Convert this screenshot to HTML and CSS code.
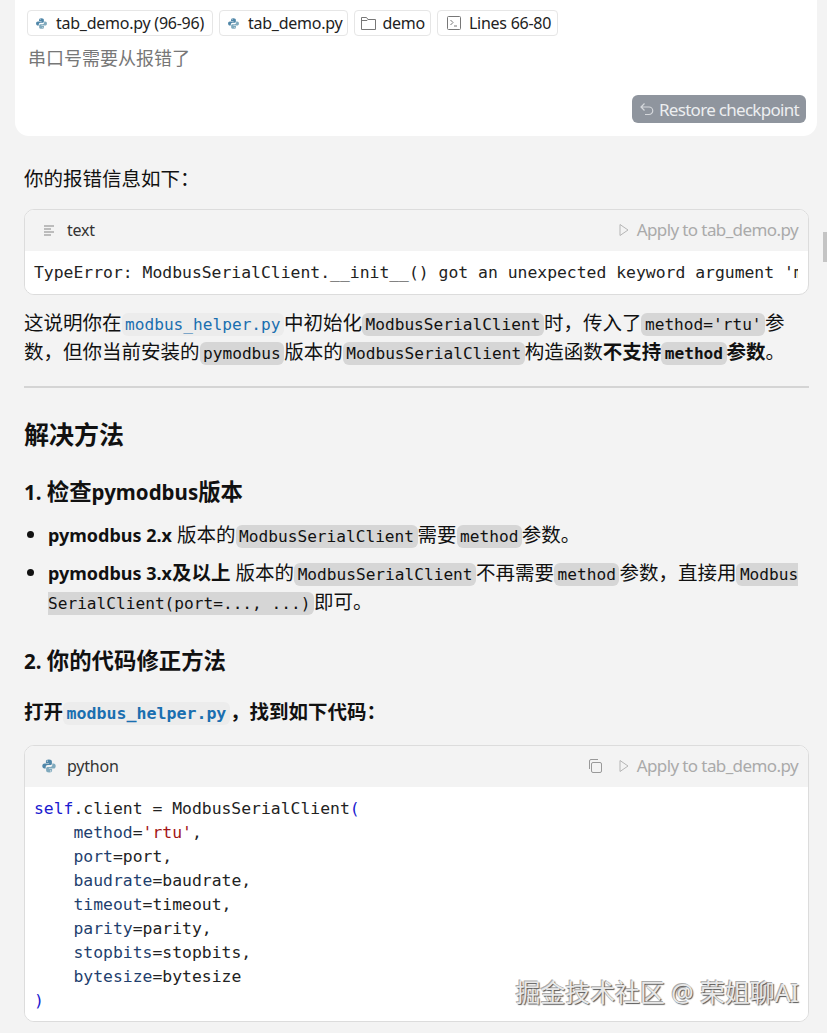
FILE: index.html
```html
<!DOCTYPE html>
<html lang="zh">
<head>
  <meta charset="UTF-8">
  <title>解决方法</title>
  <link rel="stylesheet" href="styles.css">
</head>
<body>
  <svg class="defs" width="0" height="0">
    <symbol id="py" viewBox="0 0 16 16">
      <path fill="#4f86a8" d="M7.900 1.500c-2.400 0-3 .9-3 2v1.400h3.200v.6H3.500c-1.300 0-2.200 1-2.200 2.600s.9 2.500 2.200 2.500h1.200V9.100c0-1.100.9-2 2-2h2.600c.9 0 1.600-.7 1.600-1.600V3.500c0-1.100-1-2-3-2zM6.300 2.500a.6.6 0 1 1 0 1.200.6.6 0 0 1 0-1.200z"/>
      <path fill="#7fa9bd" d="M8.100 14.500c2.400 0 3-.9 3-2v-1.400H7.900v-.6h4.600c1.300 0 2.200-1 2.200-2.600s-.9-2.500-2.200-2.500h-1.200v1.500c0 1.100-.9 2-2 2H6.700c-.9 0-1.600.7-1.600 1.600v2c0 1.100 1 2 3 2zm1.600-1a.6.6 0 1 1 0-1.200.6.6 0 0 1 0 1.200z"/>
    </symbol>
  </svg>

  <div class="user-card">
    <div class="chips">
      <span class="chip"><svg class="chip-icon"><use href="#py"/></svg>tab_demo.py (96-96)</span>
      <span class="chip"><svg class="chip-icon"><use href="#py"/></svg>tab_demo.py</span>
      <span class="chip chip-folder">
        <svg class="chip-icon" viewBox="0 0 17 16" fill="none" stroke="#777"><path d="M1.500 14.500v-12h5l1.500 2h7.500v10z"/><path d="M1.500 5.500h5.500l1-1"/></svg>
        demo
      </span>
      <span class="chip chip-term">
        <svg class="chip-icon" viewBox="0 0 14 16" fill="none" stroke="#777"><rect x=".5" y="1.500" width="13" height="13" rx="1"/><path d="M3.500 5l2.500 2.500-2.500 2.500M7 11h3"/></svg>
        Lines 66-80
      </span>
    </div>
    <p class="user-text">串口号需要从报错了</p>
    <div class="restore-row">
      <button class="restore-btn">
        <svg width="16" height="16" viewBox="0 0 16 16" fill="none" stroke="#d5d8dc" stroke-width="1.200"><path d="M5.500 2.500L2 6l3.500 3.500M2 6h8a3.700 3.700 0 0 1 0 7.500H6"/></svg>
        Restore checkpoint
      </button>
    </div>
  </div>

  <div class="content">
    <p class="intro">你的报错信息如下：</p>

    <div class="code-block">
      <div class="code-head">
        <svg class="lang-icon" viewBox="0 0 16 16" stroke="#aaa" stroke-width="1.300"><path d="M3 4h10M3 7h7M3 10h10M3 13h7"/></svg>
        <span class="lang">text</span>
        <span class="apply">
          <svg class="play" viewBox="0 0 12 14" fill="none" stroke="#b5b5b5"><path d="M2 1.500l8 5.500-8 5.500z"/></svg>
          Apply to tab_demo.py
        </span>
      </div>
      <pre class="code code-short">TypeError: ModbusSerialClient.__init__() got an unexpected keyword argument 'method'</pre>
    </div>

    <p class="para">这说明你在<code class="file">modbus_helper.py</code>中初始化<code>ModbusSerialClient</code>时，传入了<code>method='rtu'</code>参数，但你当前安装的<code>pymodbus</code>版本的<code>ModbusSerialClient</code>构造函数<strong>不支持<code>method</code>参数</strong>。</p>

    <hr class="rule">

    <h2 class="title">解决方法</h2>

    <h3 class="sub"><span class="lat">1. </span>检查<span class="lat">pymodbus</span>版本</h3>
    <ul class="list">
      <li><strong class="lat">pymodbus 2.x</strong> 版本的<code>ModbusSerialClient</code>需要<code>method</code>参数。</li>
      <li><strong><span class="lat">pymodbus 3.x</span>及以上</strong> 版本的<code>ModbusSerialClient</code>不再需要<code>method</code>参数，直接用<code>Modbus<wbr>SerialClient(port=..., ...)</code>即可。</li>
    </ul>

    <h3 class="sub sub-two"><span class="lat">2. </span>你的代码修正方法</h3>
    <p class="para open"><strong>打开<code class="file">modbus_helper.py</code>，找到如下代码：</strong></p>

    <div class="code-block">
      <div class="code-head">
        <svg class="lang-icon"><use href="#py"/></svg>
        <span class="lang">python</span>
        <span class="apply">
          <svg class="copy" viewBox="0 0 16 16" fill="none" stroke="#999"><rect x="4.500" y="4.500" width="10" height="10" rx="1.500"/><path d="M2.500 11V3a1.500 1.500 0 0 1 1.500-1.500h7"/></svg>
          <svg class="play" viewBox="0 0 12 14" fill="none" stroke="#b5b5b5"><path d="M2 1.500l8 5.500-8 5.500z"/></svg>
          Apply to tab_demo.py
        </span>
      </div>
<pre class="code"><span class="kw">self</span>.client = ModbusSerialClient<span class="kw">(</span>
    <span class="arg">method</span>=<span class="str">'rtu'</span>,
    <span class="arg">port</span>=port,
    <span class="arg">baudrate</span>=baudrate,
    <span class="arg">timeout</span>=timeout,
    <span class="arg">parity</span>=parity,
    <span class="arg">stopbits</span>=stopbits,
    <span class="arg">bytesize</span>=bytesize
<span class="kw">)</span></pre>
    </div>
  </div>

  <div class="scroll-thumb"></div>
  <div class="watermark">掘金技术社区 @ 荣姐聊AI</div>
</body>
</html>
```

FILE: styles.css
```css
* { box-sizing: border-box; }
html, body { margin: 0; padding: 0; }
body {
  position: relative;
  height: 1033px;
  overflow: hidden;
  background: #f3f3f3;
  color: #111;
  font-family: "Noto Sans", "Noto Sans CJK SC", sans-serif;
  font-size: 19.5px;
}
.defs { position: absolute; }

.user-card {
  height: 136px;
  margin: 0 10px 0 15px;
  padding: 10px 11px 0 12px;
  background: #fff;
  border-radius: 0 0 14px 14px;
}
.chips { display: flex; gap: 6px; }
.chip {
  display: flex;
  align-items: center;
  gap: 8px;
  height: 26px;
  padding: 0 5px 0 7px;
  border: 1px solid #e6e6e6;
  border-radius: 4px;
  font-size: 16px;
  letter-spacing: -0.25px;
  color: #222;
  white-space: nowrap;
}
.chip:first-child { padding-right: 8px; }
.chip-icon { width: 13px; height: 13px; flex: none; }
.chip-folder { gap: 5px; padding-left: 5px; }
.chip-folder .chip-icon { width: 17px; height: 16px; }
.chip-term { padding-left: 9px; padding-right: 6px; }
.chip-term .chip-icon { width: 14px; height: 16px; }
.user-text { margin: 9px 0 0 1px; font-size: 18px; line-height: 26px; color: #777; }
.restore-row { display: flex; justify-content: flex-end; margin-top: 24px; }
.restore-btn {
  display: flex;
  align-items: center;
  gap: 4px;
  height: 28px;
  padding: 0 7px 0 7px;
  border: none;
  border-radius: 6px;
  background: #8f959e;
  color: #eceef0;
  font-family: inherit;
  font-size: 17px;
  letter-spacing: -0.7px;
}

.content { padding: 0 18px 0 24px; }
.intro { margin: 28px 0 0; line-height: 30px; }

.code-block {
  margin-top: 15px;
  border: 1px solid #dcdcdc;
  border-radius: 10px;
  overflow: hidden;
  background: #fff;
}
.code-head {
  display: flex;
  align-items: center;
  height: 41px;
  padding: 0 10px 2px 16px;
  background: #f3f3f3;
  font-size: 16px;
}
.lang-icon { width: 16px; height: 16px; margin-right: 10px; flex: none; }
.lang { color: #333; letter-spacing: -0.2px; }
.apply {
  display: flex;
  align-items: center;
  margin-left: auto;
  color: #aaa;
  font-size: 17px;
  letter-spacing: -0.6px;
  white-space: nowrap;
}
.play { width: 12px; height: 14px; margin-right: 7px; }
.copy { width: 16px; height: 16px; margin-right: 15px; }
.code {
  margin: 0;
  padding: 10px 9px 8px;
  overflow: hidden;
  background: #fff;
  color: #222;
  font-family: "DejaVu Sans Mono", monospace;
  font-size: 16.4px;
  line-height: 24px;
}
.code-short { height: 43px; margin-right: 10px; }
.kw { color: #1a1ad0; }
.arg { color: #1f3f6e; }
.str { color: #a31515; }

code {
  padding: 2px 3.5px;
  border-radius: 6px;
  background: #d6d6d6;
  font-family: "DejaVu Sans Mono", monospace;
  font-size: 16.15px;
  line-height: 1;
}
code.file { background: #ececec; color: #1a6fb0; }
strong code.file { font-size: 16.6px; }
.lat { font-size: 18px; line-height: 1; }
.sub .lat { font-size: 20.5px; }

.para { margin: 13px 0 0; line-height: 29px; }
.rule { height: 2px; margin: 20px 0 0; border: none; background: #d4d4d4; }
.title { margin: 29px 0 0; font-size: 25px; line-height: 34px; font-weight: 700; }
.sub { margin: 26px 0 0; font-size: 22.4px; line-height: 30px; font-weight: 700; }
.sub-two { margin-top: 30px; }
.list { margin: 13px 0 0; padding-left: 24px; line-height: 29px; }
.list li { margin-bottom: 9px; }
.list li:last-child { margin-bottom: 0; }
.open { margin-top: 21px; }
.open + .code-block { margin-top: 19px; }

.scroll-thumb {
  position: absolute;
  top: 232px;
  right: 0;
  width: 4px;
  height: 30px;
  background: #c4c4c4;
}
.watermark {
  position: absolute;
  right: 28px;
  top: 976px;
  font-size: 25px;
  line-height: 32px;
  letter-spacing: -0.1px;
  color: #e8e8e8;
  text-shadow: 1px 1px 1px #555, -1px -1px 0 #aaa;
}
```
